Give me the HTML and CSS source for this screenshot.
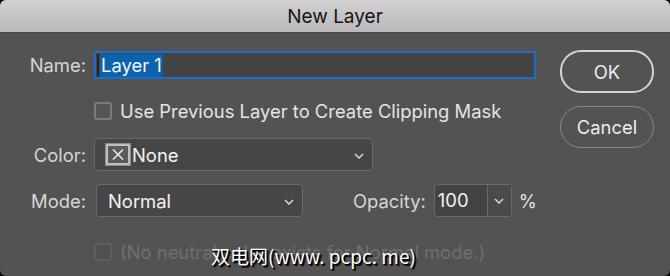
FILE: index.html
```html
<!DOCTYPE html>
<html lang="en">
<head>
    <meta charset="UTF-8">
    <meta name="viewport" content="width=device-width, initial-scale=1.0">
    <title>New Layer</title>
    <link rel="stylesheet" href="styles.css">
</head>
<body>
    <div class="window">
        <div class="titlebar">New Layer</div>
        <div class="content">
            <div class="form">
                <div class="row row-name">
                    <label class="label" for="layerName">Name:</label>
                    <div class="name-field" id="layerName">
                        <span class="caret"></span><span class="selected">Layer 1</span>
                    </div>
                </div>
                <div class="row row-clip">
                    <span class="label"></span>
                    <div class="check">
                        <span class="box"></span>
                        <span>Use Previous Layer to Create Clipping Mask</span>
                    </div>
                </div>
                <div class="row row-color">
                    <span class="label">Color:</span>
                    <div class="select select-color">
                        <svg class="swatch" width="26" height="23" viewBox="0 0 26 23">
                            <rect x="0.5" y="0.5" width="25" height="22" fill="none" stroke="#8c8c8c"/>
                            <rect x="2" y="2" width="22" height="19" fill="#5a5a5a" stroke="#e4e4e4" stroke-width="1.5"/>
                            <path d="M8 6.5 L18 16.5 M18 6.5 L8 16.5" stroke="#e8e8e8" stroke-width="1.6"/>
                        </svg>
                        <span class="value">None</span>
                        <svg class="chevron" width="10" height="6" viewBox="0 0 10 6">
                            <path d="M1 1 L5 5 L9 1" fill="none" stroke="#d8d8d8" stroke-width="1.5"/>
                        </svg>
                    </div>
                </div>
                <div class="row row-mode">
                    <span class="label">Mode:</span>
                    <div class="select select-mode">
                        <span class="value">Normal</span>
                        <svg class="chevron" width="10" height="6" viewBox="0 0 10 6">
                            <path d="M1 1 L5 5 L9 1" fill="none" stroke="#d8d8d8" stroke-width="1.5"/>
                        </svg>
                    </div>
                    <span class="opacity-label">Opacity:</span>
                    <div class="combo">
                        <span class="combo-value">100</span>
                        <span class="combo-arrow">
                            <svg width="10" height="6" viewBox="0 0 10 6">
                                <path d="M1 1 L5 5 L9 1" fill="none" stroke="#d8d8d8" stroke-width="1.5"/>
                            </svg>
                        </span>
                    </div>
                    <span class="percent">%</span>
                </div>
                <div class="row row-neutral">
                    <span class="label"></span>
                    <div class="check disabled">
                        <span class="box"></span>
                        <span>(No neutral color exists for Normal mode.)</span>
                    </div>
                </div>
            </div>
            <div class="buttons">
                <button class="btn btn-default">OK</button>
                <button class="btn">Cancel</button>
            </div>
        </div>
        <div class="watermark">双电网(www. pcpc. me)</div>
    </div>
</body>
</html>
```

FILE: styles.css
```css
body {
    margin: 0;
    background-color: #000;
    font-family: "Inter", "Liberation Sans", sans-serif;
}
.window {
    position: relative;
    width: 670px;
    height: 276px;
    background-color: #535353;
    border-radius: 6px;
    overflow: hidden;
    color: #d6d6d6;
    font-size: 18.4px;
}
.titlebar {
    height: 33px;
    line-height: 34px;
    text-align: center;
    font-size: 19px;
    color: #141414;
    background: linear-gradient(#d2d0d2, #bab8ba);
    border-bottom: 1px solid #4a4a4a;
    box-sizing: border-box;
}
.content {
    display: flex;
}
.form {
    width: 560px;
    flex-shrink: 0;
}
.row {
    display: flex;
    align-items: center;
    white-space: nowrap;
}
.label {
    width: 86px;
    margin-right: 8px;
    text-align: right;
    flex-shrink: 0;
}
.row-name {
    margin-top: 18px;
    height: 28px;
}
.name-field {
    width: 442px;
    height: 28px;
    box-sizing: border-box;
    border: 2px solid #1b6ccc;
    background-color: #434343;
    display: flex;
    align-items: center;
    padding-left: 1px;
}
.caret {
    width: 2px;
    height: 23px;
    background-color: #2b2520;
    margin-right: 1px;
}
.selected {
    background-color: #0b63ad;
    color: #f4f4f4;
    height: 23px;
    line-height: 23px;
    padding: 0 1px;
}
.row-clip {
    margin-top: 23px;
    height: 18px;
}
.check {
    display: flex;
    align-items: center;
    color: #e4e4e4;
}
.box {
    width: 14px;
    height: 14px;
    border: 2px solid #7c7c7c;
    border-radius: 3px;
    background-color: #555;
    margin-right: 8px;
    flex-shrink: 0;
}
.row-color {
    margin-top: 18px;
    height: 33px;
}
.select {
    height: 33px;
    box-sizing: border-box;
    border: 1px solid #6a6a6a;
    border-radius: 4px;
    background-color: #464646;
    display: flex;
    align-items: center;
    position: relative;
    color: #f2f2f2;
}
.select .chevron {
    position: absolute;
    right: 8px;
    top: 14px;
}
.select-color {
    width: 279px;
    padding-left: 10px;
}
.swatch {
    margin-right: 1px;
}
.row-mode {
    margin-top: 13px;
    height: 33px;
}
.select-mode {
    width: 207px;
    margin-left: 2px;
    padding-left: 11px;
}
.opacity-label {
    margin-left: 50px;
    margin-right: 8px;
}
.combo {
    display: flex;
    height: 33px;
    box-sizing: border-box;
    border: 1px solid #6a6a6a;
    border-radius: 4px;
    background-color: #434343;
    color: #f2f2f2;
}
.combo-value {
    width: 53px;
    padding-left: 3px;
    box-sizing: border-box;
    line-height: 31px;
    border-right: 1px solid #6a6a6a;
}
.combo-arrow {
    width: 23px;
    display: flex;
    align-items: center;
    justify-content: center;
    background-color: #4a4a4a;
}
.percent {
    margin-left: 7px;
    color: #e0e0e0;
}
.row-neutral {
    margin-top: 26px;
    height: 18px;
}
.disabled {
    color: #6f6f6f;
}
.disabled .box {
    border-color: #5e5e5e;
    background-color: #505050;
}
.buttons {
    display: flex;
    flex-direction: column;
    gap: 13px;
    margin-top: 17px;
}
.btn {
    width: 94px;
    height: 42px;
    border-radius: 21px;
    border: 1px solid #858585;
    background-color: #535353;
    color: #ececec;
    font-family: inherit;
    font-size: 18.4px;
    padding: 0;
}
.btn-default {
    border: 2px solid #d4d4d4;
    height: 43px;
}
.watermark {
    position: absolute;
    left: 211px;
    top: 242px;
    font-family: "Noto Sans CJK SC", sans-serif;
    font-size: 19px;
    color: #fff;
    text-shadow: 1px 1px 0 #000, 2px 2px 1px #000;
}
```
